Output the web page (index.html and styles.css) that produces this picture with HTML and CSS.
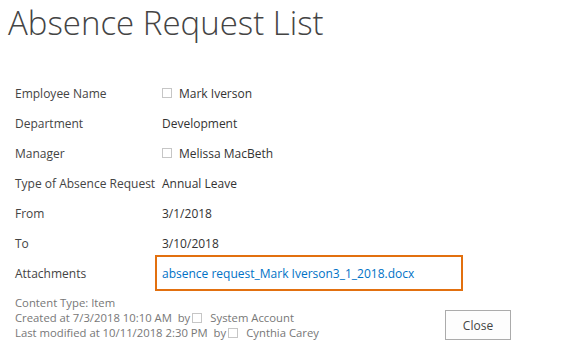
FILE: index.html
```html
<!DOCTYPE html>
<html lang="en">
<head>
    <meta charset="UTF-8">
    <title>Absence Request List</title>
    <link rel="stylesheet" href="styles.css">
</head>
<body>
    <h1 class="page-title">Absence Request List</h1>

    <div class="item-form">
        <div class="field-label">Employee Name</div>
        <div class="field-value"><span class="presence"></span>Mark Iverson</div>

        <div class="field-label">Department</div>
        <div class="field-value">Development</div>

        <div class="field-label">Manager</div>
        <div class="field-value"><span class="presence"></span>Melissa MacBeth</div>

        <div class="field-label">Type of Absence Request</div>
        <div class="field-value">Annual Leave</div>

        <div class="field-label">From</div>
        <div class="field-value">3/1/2018</div>

        <div class="field-label">To</div>
        <div class="field-value">3/10/2018</div>

        <div class="field-label">Attachments</div>
        <div class="field-value">
            <div class="attachment-box">
                <a href="#" class="attachment-link">absence request_Mark Iverson3_1_2018.docx</a>
            </div>
        </div>
    </div>

    <div class="form-footer">
        <div class="item-info">
            <div>Content Type: Item</div>
            <div>Created at 7/3/2018 10:10 AM&nbsp; by<span class="presence small"></span>System Account</div>
            <div>Last modified at 10/11/2018 2:30 PM&nbsp; by<span class="presence small"></span>Cynthia Carey</div>
        </div>
        <button type="button" class="btn-close">Close</button>
    </div>
</body>
</html>
```

FILE: styles.css
```css
/* Base */
* {
    margin: 0;
    padding: 0;
    box-sizing: border-box;
}

body {
    font-family: 'Open Sans', 'Noto Sans', sans-serif;
    font-size: 12px;
    color: #444;
    background: #fff;
    width: 577px;
    height: 352px;
    overflow: hidden;
}

/* Title */
.page-title {
    font-weight: 300;
    font-size: 33px;
    line-height: 45px;
    color: #444;
    padding-left: 8px;
}

/* Item fields */
.item-form {
    display: grid;
    grid-template-columns: 147px 1fr;
    grid-auto-rows: 30px;
    margin-top: 33px;
    padding-left: 15px;
}

.field-label,
.field-value {
    display: flex;
    align-items: center;
    white-space: nowrap;
}

.field-label {
    color: #444;
}

.field-value {
    color: #333;
}

.presence {
    display: inline-block;
    width: 10px;
    height: 10px;
    border: 1px solid #c6c6c6;
    margin-right: 7px;
}

.presence.small {
    margin: 0 8px 0 2px;
}

.attachment-box {
    width: 308px;
    height: 36px;
    margin: 0 0 0 -7px;
    padding-left: 5px;
    border: 2px solid #e2700f;
    display: flex;
    align-items: center;
}

.attachment-link {
    color: #0072c6;
    text-decoration: none;
}

/* Footer */
.form-footer {
    display: flex;
    align-items: flex-start;
    padding-left: 15px;
    margin-top: 7px;
}

.item-info {
    font-size: 11.3px;
    line-height: 15px;
    color: #777;
    width: 430px;
}

.item-info .presence {
    vertical-align: -1px;
}

.btn-close {
    margin-top: 15px;
    width: 66px;
    height: 30px;
    border: 1px solid #ababab;
    background: #fdfdfd;
    font-family: inherit;
    font-size: 12px;
    color: #444;
}
```
